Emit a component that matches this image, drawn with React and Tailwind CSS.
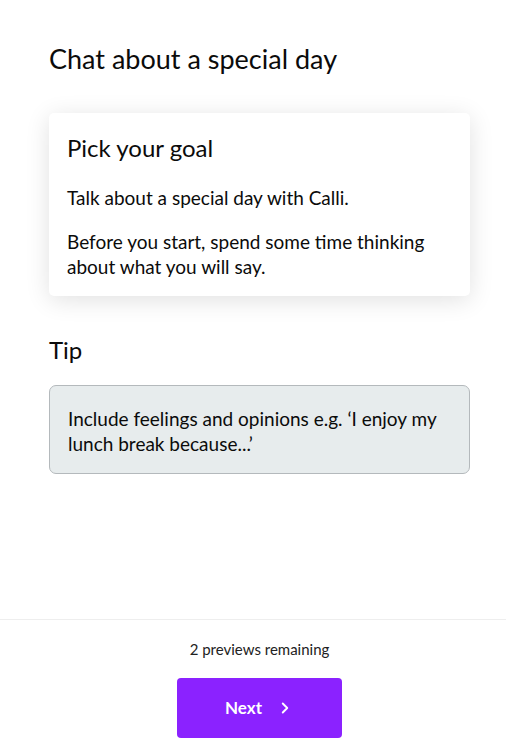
import { FiChevronRight } from 'react-icons/fi'

export default function App() {
  return (
    <div
      className="w-[506px] h-[752px] bg-white flex flex-col text-[#0b0b0b]"
      style={{ fontFamily: 'Lato, "Noto Sans", sans-serif' }}
    >
      <div className="flex-1 pl-[49px] pr-[36px] pt-[41px]">
        <h1 className="text-[27px] leading-[36px] font-normal">Chat about a special day</h1>

        {/* Goal card */}
        <div className="mt-[36px] rounded-[5px] bg-white shadow-[0_4px_24px_rgba(0,0,0,0.12)] px-[18px] pt-[19px] pb-[17px]">
          <h2 className="text-[24px] leading-[32px]">Pick your goal</h2>
          <p className="mt-[21px] text-[19px] leading-[25px]">Talk about a special day with Calli.</p>
          <p className="mt-[19px] text-[19px] leading-[25px]">
            Before you start, spend some time thinking about what you will say.
          </p>
        </div>

        <h2 className="mt-[38px] text-[24px] leading-[32px]">Tip</h2>

        {/* Tip box */}
        <div className="mt-[19px] rounded-[7px] border border-[#b4b9bc] bg-[#e7eced] px-[18px] pt-[20px] pb-[17px]">
          <p className="text-[19px] leading-[25px]">
            Include feelings and opinions e.g. ‘I enjoy my lunch break because...’
          </p>
        </div>
      </div>

      <div className="border-t border-[#eeeeee] pl-[49px] pr-[36px] flex flex-col items-center pt-[19px] pb-[14px]">
        <p className="text-[15px] leading-[20px] text-[#222]">2 previews remaining</p>
        <button className="mt-[19px] w-[165px] h-[60px] rounded-[4px] bg-[#8b22ff] text-white flex items-center justify-center gap-[14px]">
          <span className="text-[17px] font-bold">Next</span>
          <FiChevronRight size={18} strokeWidth={2.5} />
        </button>
      </div>
    </div>
  )
}
